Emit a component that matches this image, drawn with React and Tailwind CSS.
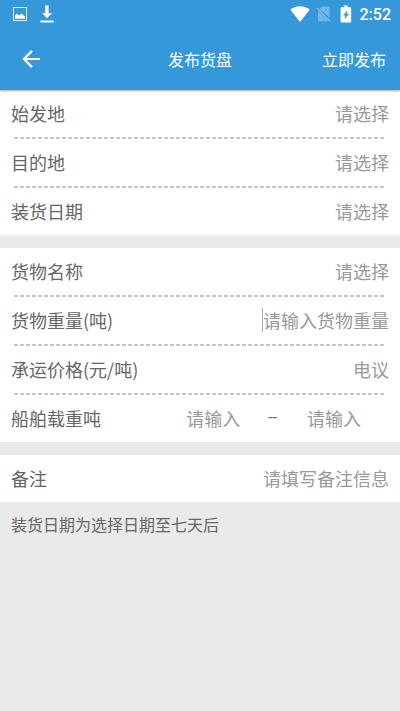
import { useState } from 'react'

// 状态栏图标
function PictureIcon() {
  return (
    <svg viewBox="0 0 14 14" className="w-3.5 h-3.5" aria-hidden="true">
      <rect x="0.5" y="0.5" width="13" height="13" fill="none" stroke="#fff" strokeOpacity="0.8" />
      <path d="M2 11.7V8.6L4 6.6l2 2L8.6 6.6l3.4 3.2v1.9z" fill="#fff" />
    </svg>
  )
}

function DownloadIcon() {
  return (
    <svg viewBox="0 0 14 18" className="w-3.5 h-[18px]" fill="#fff" aria-hidden="true">
      <path d="M5.2 0.5h3.4V8H12l-5 5.2L2 8h3.2zM0.4 15.6h13.2v2H0.4z" />
    </svg>
  )
}

function WifiIcon() {
  return (
    <svg viewBox="0 0 20 16" className="w-5 h-4" fill="#fff" aria-hidden="true">
      <path d="M10 16L0.4 3.8C3 1.5 6.3 0.2 10 0.2s7 1.3 9.6 3.6z" />
    </svg>
  )
}

function NoSimIcon() {
  return (
    <svg viewBox="0 0 15 16" className="w-[15px] h-4" aria-hidden="true">
      <path
        d="M5.2 0.7h7.3c.7 0 1.1.4 1.1 1.1v9.7L3.2 2.7zM2 4.4l10.9 10.9H3.1c-.7 0-1.1-.4-1.1-1.1z"
        fill="#fff"
        fillOpacity="0.3"
      />
      <path d="M0.9 1.9l13.4 13.4" stroke="#fff" strokeOpacity="0.4" strokeWidth="1.1" />
    </svg>
  )
}

function BatteryIcon() {
  return (
    <svg viewBox="0 0 12 18" className="w-3 h-[18px]" aria-hidden="true">
      <path
        d="M3.8 0.6h4v1.6h2.4c.6 0 1 .4 1 1v13.2c0 .6-.4 1-1 1H1.6c-.6 0-1-.4-1-1V3.2c0-.6.4-1 1-1h2.2z"
        fill="#fff"
      />
      <path d="M7.4 5L3 10.4h2.4L4.4 14.6l4.8-5.8H6.6z" fill="#3498db" />
    </svg>
  )
}

function BackIcon() {
  return (
    <svg viewBox="0 0 18 18" className="w-[18px] h-[18px]" fill="none" stroke="#fff" strokeWidth="2.2" aria-hidden="true">
      <path d="M18 9H2M10 0.9L1.9 9l8.1 8.1" />
    </svg>
  )
}

function StatusBar() {
  return (
    <div className="flex items-center h-7 pl-[13px] pr-[9px]">
      <PictureIcon />
      <div className="ml-[13px]">
        <DownloadIcon />
      </div>
      <div className="flex items-center ml-auto">
        <WifiIcon />
        <div className="ml-1.5">
          <NoSimIcon />
        </div>
        <div className="ml-[9px]">
          <BatteryIcon />
        </div>
        <span className="ml-2 pt-0.5 text-base leading-5 font-medium font-[Roboto,sans-serif]">2:52</span>
      </div>
    </div>
  )
}

function Row({ id, label, last, children }) {
  return (
    <div>
      <div className="flex items-center justify-between h-[47px] px-[11px] pb-0.5">
        <label htmlFor={id} className="text-[#666]">{label}</label>
        {children}
      </div>
      {!last && (
        <div className="h-0.5 ml-3.5 mr-4 bg-[repeating-linear-gradient(90deg,#c6c6c6_0_4px,#fff_4px_6px)]" />
      )}
    </div>
  )
}

function PickerRow({ id, label, last }) {
  return (
    <Row id={id} label={label} last={last}>
      <button id={id} type="button" className="text-[#999]">请选择</button>
    </Row>
  )
}

const inputClass = 'bg-transparent outline-none text-[#666] placeholder:text-[#999]'

export default function App() {
  const [form, setForm] = useState({ weight: '', price: '', min: '', max: '', remark: '' })
  const bind = (key) => ({
    value: form[key],
    onChange: (e) => setForm({ ...form, [key]: e.target.value }),
  })

  return (
    <div className="min-h-screen bg-[#eaeaea] text-lg leading-6 font-['Noto_Sans_CJK_SC',sans-serif]">
      <header className="relative z-10 bg-[#3498db] text-white shadow-[0_1px_2px_rgba(0,0,0,0.35)]">
        <StatusBar />
        <div className="grid grid-cols-[1fr_auto_1fr] items-center h-[62px] px-[22px] text-base">
          <button type="button" aria-label="返回" className="justify-self-start">
            <BackIcon />
          </button>
          <h1>发布货盘</h1>
          <button type="button" className="justify-self-end -mr-2">立即发布</button>
        </div>
      </header>

      <form className="flex flex-col gap-[13px]">
        <section className="bg-white">
          <PickerRow id="from" label="始发地" />
          <PickerRow id="to" label="目的地" />
          <PickerRow id="date" label="装货日期" last />
        </section>

        <section className="bg-white">
          <PickerRow id="goods" label="货物名称" />
          <Row id="weight" label="货物重量(吨)">
            <div className="flex items-center">
              <span className="w-px h-6 bg-[#aaa]" />
              <input id="weight" placeholder="请输入货物重量" className={`${inputClass} w-[126px] text-right`} {...bind('weight')} />
            </div>
          </Row>
          <Row id="price" label="承运价格(元/吨)">
            <input id="price" placeholder="电议" className={`${inputClass} w-32 text-right`} {...bind('price')} />
          </Row>
          <Row id="min" label="船舶载重吨" last>
            <div className="flex items-center text-[#666]">
              <input id="min" placeholder="请输入" className={`${inputClass} w-[110px] text-center`} {...bind('min')} />
              <span className="pr-0.5 text-base font-[Roboto,sans-serif]">--</span>
              <input aria-label="最大载重吨" placeholder="请输入" className={`${inputClass} w-[110px] text-center`} {...bind('max')} />
            </div>
          </Row>
        </section>

        <section className="bg-white">
          <Row id="remark" label="备注" last>
            <input id="remark" placeholder="请填写备注信息" className={`${inputClass} w-60 text-right`} {...bind('remark')} />
          </Row>
        </section>
      </form>

      <p className="px-[11px] pt-2.5 text-base text-[#666]">装货日期为选择日期至七天后</p>
    </div>
  )
}
